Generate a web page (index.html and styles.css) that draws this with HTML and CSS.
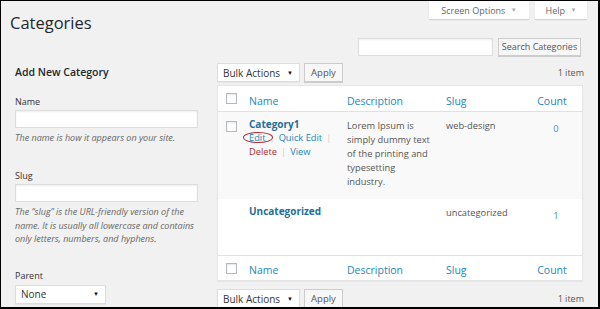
FILE: index.html
```html
<!DOCTYPE html>
<html>
<head>
<meta charset="utf-8">
<link rel="stylesheet" href="styles.css">
</head>
<body>
<div class="frame">
  <div class="header">
    <h1 class="title">Categories</h1>
    <div class="tabs">
      <div class="tab tab-screen">Screen Options <span class="caret">&#9660;</span></div>
      <div class="tab tab-help">Help <span class="caret">&#9660;</span></div>
    </div>
  </div>
  <div class="searchbar">
    <div class="search-input"></div>
    <div class="btn btn-search">Search Categories</div>
  </div>
  <div class="main">
    <div class="form-col">
      <h2 class="form-title">Add New Category</h2>
      <div class="label label-name">Name</div>
      <div class="field"></div>
      <p class="hint hint-name">The name is how it appears on your site.</p>
      <div class="label label-slug">Slug</div>
      <div class="field"></div>
      <p class="hint hint-slug">The “slug” is the URL-friendly version of the name. It is usually all lowercase and contains only letters, numbers, and hyphens.</p>
      <div class="label label-parent">Parent</div>
      <div class="select select-parent"><span>None</span><span class="sel-caret">&#9660;</span></div>
    </div>
    <div class="list-col">
      <div class="tablenav">
        <div class="select select-bulk"><span>Bulk Actions</span><span class="sel-caret">&#9660;</span></div>
        <div class="btn btn-apply">Apply</div>
        <div class="count-items">1 item</div>
      </div>
      <div class="table">
        <div class="trow thead">
          <div class="cell cell-cb"><span class="cb"></span></div>
          <div class="cell"><span class="th-link">Name</span></div>
          <div class="cell"><span class="th-link">Description</span></div>
          <div class="cell"><span class="th-link">Slug</span></div>
          <div class="cell cell-count th-count"><span class="th-link">Count</span></div>
        </div>
        <div class="trow row-alt row-first">
          <div class="cell cell-cb"><span class="cb cb-row"></span></div>
          <div class="cell">
            <div class="row-title">Category1</div>
            <div class="row-actions">
              <span class="act-edit"><span class="act">Edit</span><span class="circle"></span></span><span class="sep">|</span><span class="act">Quick Edit</span><span class="sep">|</span>
            </div>
            <div class="row-actions">
              <span class="act act-delete">Delete</span><span class="sep">|</span><span class="act">View</span>
            </div>
          </div>
          <div class="cell cell-text">Lorem Ipsum is<br>simply dummy text<br>of the printing and<br>typesetting<br>industry.</div>
          <div class="cell cell-text">web-design</div>
          <div class="cell cell-count"><span class="count-link">0</span></div>
        </div>
        <div class="trow row-second">
          <div class="cell cell-cb"></div>
          <div class="cell"><div class="row-title">Uncategorized</div></div>
          <div class="cell cell-text"></div>
          <div class="cell cell-text">uncategorized</div>
          <div class="cell cell-count"><span class="count-link">1</span></div>
        </div>
        <div class="trow tfoot">
          <div class="cell cell-cb"><span class="cb"></span></div>
          <div class="cell"><span class="th-link">Name</span></div>
          <div class="cell"><span class="th-link">Description</span></div>
          <div class="cell"><span class="th-link">Slug</span></div>
          <div class="cell cell-count th-count"><span class="th-link">Count</span></div>
        </div>
      </div>
      <div class="tablenav tablenav-bottom">
        <div class="select select-bulk"><span>Bulk Actions</span><span class="sel-caret">&#9660;</span></div>
        <div class="btn btn-apply">Apply</div>
        <div class="count-items">1 item</div>
      </div>
    </div>
  </div>
</div>
</body>
</html>
```
FILE: styles.css
```css
* { box-sizing: border-box; }
html, body { margin: 0; padding: 0; }
body {
  font-family: "Open Sans", "Liberation Sans", sans-serif;
  color: #444;
  background: #000;
}
.frame {
  width: 600px;
  height: 309px;
  overflow: hidden;
  background: #f1f1f1;
  border-style: solid;
  border-color: #000;
  border-width: 1px 2px 2px 1px;
}
.header {
  display: flex;
  justify-content: space-between;
  align-items: flex-start;
  height: 32px;
}
.title {
  margin: 0;
  padding: 12px 0 0 9px;
  font-size: 16.5px;
  line-height: 20px;
  font-weight: 400;
  color: #23282d;
}
.tabs {
  display: flex;
  gap: 6px;
  padding-right: 11px;
}
.tab {
  height: 18px;
  line-height: 18px;
  background: #fff;
  font-size: 9px;
  color: #666;
  text-align: center;
  box-shadow: 0 1px 1px rgba(0,0,0,.12);
}
.tab-screen { width: 100px; }
.tab-help { width: 52px; }
.caret { font-size: 6px; color: #aaa; vertical-align: 2px; margin-left: 3px; }
.searchbar {
  display: flex;
  justify-content: flex-end;
  gap: 5px;
  padding-right: 17px;
  margin-top: 5px;
}
.search-input {
  width: 135px;
  height: 18px;
  background: #fff;
  border: 1px solid #ddd;
  box-shadow: inset 0 1px 2px rgba(0,0,0,.07);
}
.btn {
  height: 18px;
  line-height: 16px;
  background: #f7f7f7;
  border: 1px solid #ccc;
  box-shadow: 0 1px 0 #ccc;
  color: #555;
  font-size: 9px;
  text-align: center;
}
.btn-search { width: 83px; }
.main {
  display: flex;
  gap: 19px;
  padding-left: 14px;
  margin-top: 7px;
}
.form-col { width: 183px; }
.form-title {
  margin: 0;
  padding-top: 2px;
  font-size: 10.5px;
  line-height: 14px;
  font-weight: 600;
  color: #23282d;
}
.label {
  font-size: 9px;
  line-height: 14px;
  color: #333;
  margin-bottom: 1px;
}
.label-name { margin-top: 16px; }
.label-slug { margin-top: 24px; }
.label-parent { margin-top: 23px; margin-bottom: 2px; }
.field {
  height: 18px;
  background: #fff;
  border: 1px solid #ddd;
  box-shadow: inset 0 1px 2px rgba(0,0,0,.07);
}
.hint {
  margin: 0;
  font-size: 9px;
  font-style: italic;
  color: #666;
}
.hint-name { margin-top: 3px; line-height: 14px; }
.hint-slug { margin-top: 3px; line-height: 13.5px; }
.select {
  display: flex;
  justify-content: space-between;
  align-items: center;
  height: 19px;
  background: #fff;
  border: 1px solid #ddd;
  box-shadow: 0 1px 1px rgba(0,0,0,.04);
  color: #333;
  font-size: 10px;
  padding: 0 6px 0 5px;
}
.select-parent { width: 91px; }
.select-bulk { width: 83px; }
.sel-caret { font-size: 6px; color: #111; }
.list-col { width: 367px; }
.tablenav {
  display: flex;
  align-items: center;
  height: 19px;
}
.btn-apply { width: 39px; height: 19px; line-height: 17px; margin-left: 4px; font-size: 9.5px; }
.count-items {
  margin-left: auto;
  font-size: 9px;
  color: #555;
}
.tablenav-bottom { margin-top: 8px; }
.table {
  margin-top: 3px;
  width: 366px;
  background: #fff;
  border: 1px solid #e5e5e5;
  box-shadow: 0 1px 1px rgba(0,0,0,.04);
}
.trow {
  display: grid;
  grid-template-columns: 23px 98px 99px 92px 52px;
}
.thead { height: 26px; border-bottom: 1px solid #e1e1e1; align-items: center; }
.tfoot { height: 25px; border-top: 1px solid #e1e1e1; align-items: center; }
.row-first { height: 87px; background: #f9f9f9; }
.row-second { height: 56px; }
.cell { padding: 0 8px; }
.row-first .cell, .row-second .cell { padding-top: 5px; }
.cell-cb { padding: 0 0 0 8px; display: flex; }
.thead .cell-cb, .tfoot .cell-cb { align-items: center; }
.row-first .cell-cb { padding-top: 9px; }
.cell-count { text-align: center; padding: 0; }
.th-count { padding-right: 8px; }
.th-link { font-size: 10.5px; color: #2288ba; line-height: 14px; }
.cb {
  display: block;
  width: 11px;
  height: 11px;
  background: #fff;
  border: 1px solid #b4b9be;
  box-shadow: inset 0 1px 2px rgba(0,0,0,.1);
}
.row-title {
  font-size: 10px;
  font-weight: 700;
  line-height: 14px;
  color: #1f6f98;
}
.row-actions {
  font-size: 9.3px;
  line-height: 14px;
  white-space: nowrap;
}
.act { color: #2288ba; }
.act-delete { color: #b32d2e; }
.sep { color: #ccc; margin: 0 4px; }
.act-edit { position: relative; }
.circle {
  position: absolute;
  left: -6px;
  top: 1px;
  width: 30px;
  height: 11px;
  border: 1.5px solid #b5252a;
  border-radius: 50%;
}
.cell-text {
  font-size: 9.3px;
  line-height: 14px;
  color: #555;
}
.row-first .cell-text, .row-second .cell-text { padding-top: 7px; }
.count-link { font-size: 9.3px; line-height: 14px; color: #3b95c6; }
.row-first .cell-count, .row-second .cell-count { line-height: 14px; padding-top: 7px; padding-left: 0; }
```
